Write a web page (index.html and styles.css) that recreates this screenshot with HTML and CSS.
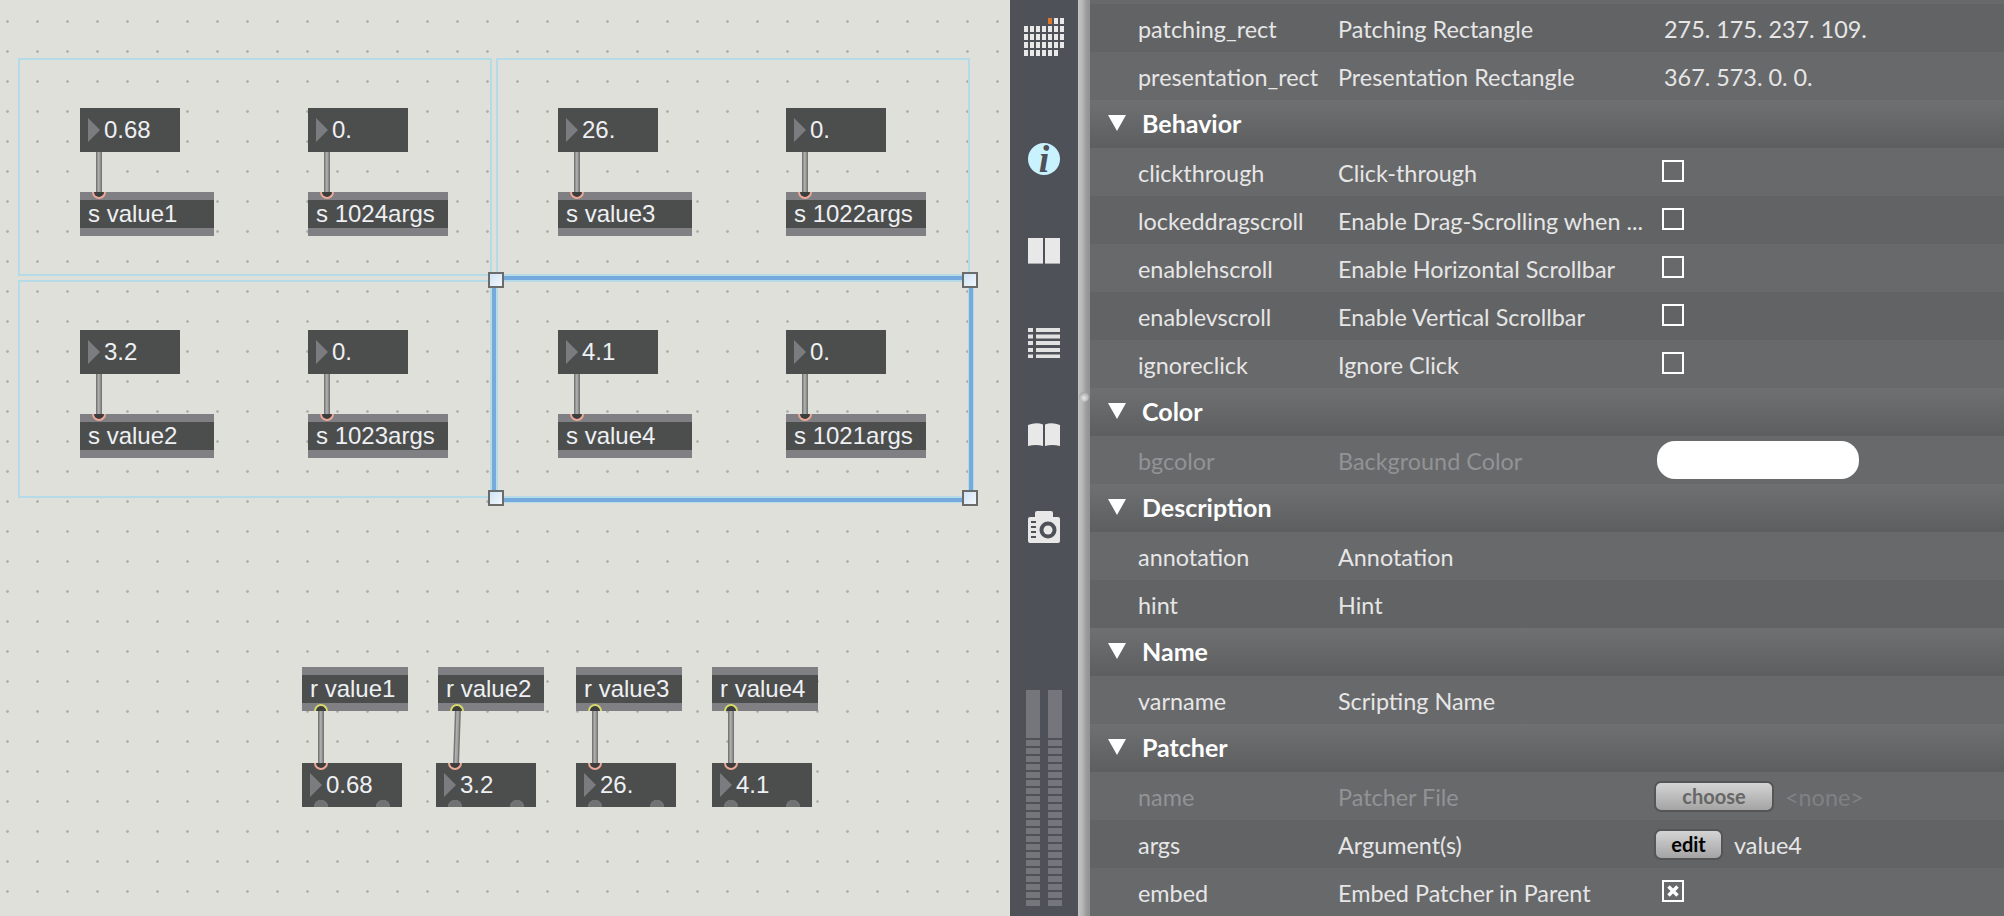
FILE: index.html
```html
<!DOCTYPE html>
<html lang="en">
<head>
    <meta charset="UTF-8">
    <meta name="viewport" content="width=device-width, initial-scale=1.0">
    <title>Patcher</title>
    <link rel="stylesheet" href="styles.css">
</head>
<body>
    <main class="canvas">
        <div class="patch patch-a">
            <div class="pair">
                <div class="num">0.68</div>
                <div class="cable cable-send"></div>
                <div class="send send-short">s value1</div>
            </div>
            <div class="pair">
                <div class="num">0.</div>
                <div class="cable cable-send"></div>
                <div class="send send-long">s 1024args</div>
            </div>
        </div>
        <div class="patch patch-b">
            <div class="pair">
                <div class="num">26.</div>
                <div class="cable cable-send"></div>
                <div class="send send-short">s value3</div>
            </div>
            <div class="pair">
                <div class="num">0.</div>
                <div class="cable cable-send"></div>
                <div class="send send-long">s 1022args</div>
            </div>
        </div>
        <div class="patch patch-c">
            <div class="pair">
                <div class="num">3.2</div>
                <div class="cable cable-send"></div>
                <div class="send send-short">s value2</div>
            </div>
            <div class="pair">
                <div class="num">0.</div>
                <div class="cable cable-send"></div>
                <div class="send send-long">s 1023args</div>
            </div>
        </div>
        <div class="patch patch-d">
            <div class="pair">
                <div class="num">4.1</div>
                <div class="cable cable-send"></div>
                <div class="send send-short">s value4</div>
            </div>
            <div class="pair">
                <div class="num">0.</div>
                <div class="cable cable-send"></div>
                <div class="send send-long">s 1021args</div>
            </div>
        </div>

        <div class="selection">
            <span class="handle handle-tl"></span>
            <span class="handle handle-tr"></span>
            <span class="handle handle-bl"></span>
            <span class="handle handle-br"></span>
        </div>

        <div class="receivers">
            <div class="recv-pair">
                <div class="recv">r value1</div>
                <div class="cable cable-recv"></div>
                <div class="num num-out">0.68</div>
            </div>
            <div class="recv-pair">
                <div class="recv">r value2</div>
                <div class="cable cable-recv cable-slant"></div>
                <div class="num num-out num-nudge">3.2</div>
            </div>
            <div class="recv-pair">
                <div class="recv">r value3</div>
                <div class="cable cable-recv"></div>
                <div class="num num-out">26.</div>
            </div>
            <div class="recv-pair">
                <div class="recv">r value4</div>
                <div class="cable cable-recv"></div>
                <div class="num num-out">4.1</div>
            </div>
        </div>
    </main>

    <nav class="sidebar">
        <svg class="icon icon-logo" width="40" height="38" viewBox="0 0 40 38">
            <g stroke="#e8e8e8" stroke-width="6" stroke-dasharray="4 2">
                <line x1="24" y1="3" x2="40" y2="3" stroke="#d9772b" stroke-dasharray="4 40"/>
                <line x1="30" y1="3" x2="40" y2="3"/>
                <line x1="0" y1="11" x2="40" y2="11"/>
                <line x1="0" y1="19" x2="40" y2="19"/>
                <line x1="0" y1="27" x2="40" y2="27"/>
                <line x1="0" y1="35" x2="34" y2="35"/>
            </g>
        </svg>
        <div class="icon icon-info"><span class="info-letter">i</span></div>
        <svg class="icon icon-pages" width="32" height="26" viewBox="0 0 32 26">
            <rect x="0" y="0" width="15" height="26" fill="#a9aaad"/>
            <rect x="17" y="0" width="15" height="26" fill="#a9aaad"/>
            <rect x="0" y="0" width="15" height="25" fill="#e8e8e8"/>
            <rect x="17" y="0" width="15" height="25" fill="#e8e8e8"/>
        </svg>
        <svg class="icon icon-list" width="32" height="30" viewBox="0 0 32 30">
            <g fill="#e2e2e2">
                <rect x="0" y="0" width="5" height="4"/>
                <rect x="8" y="0" width="24" height="4"/>
                <rect x="0" y="6.500" width="5" height="4"/>
                <rect x="8" y="6.500" width="24" height="4"/>
                <rect x="0" y="13" width="5" height="4"/>
                <rect x="8" y="13" width="24" height="4"/>
                <rect x="0" y="20" width="5" height="4"/>
                <rect x="8" y="20" width="24" height="4"/>
                <rect x="0" y="26.500" width="5" height="3.500"/>
                <rect x="8" y="26.500" width="24" height="3.500"/>
            </g>
        </svg>
        <svg class="icon icon-book" width="32" height="24" viewBox="0 0 32 24">
            <path fill="#e8e8e8" d="M0 2 Q8 -1 15 1.500 V23 Q8 21 0 23 Z M17 1.500 Q24 -1 32 2 V23 Q24 21 17 23 Z"/>
        </svg>
        <svg class="icon icon-camera" width="32" height="32" viewBox="0 0 32 32">
            <path fill="#e8e8e8" d="M7 6 V2 Q7 0 9 0 H23 Q25 0 25 2 V6 H30 Q32 6 32 8 V30 Q32 32 30 32 H2 Q0 32 0 30 V8 Q0 6 2 6 Z"/>
            <g fill="#4e5158">
                <rect x="3" y="10" width="5" height="2"/>
                <rect x="3" y="15" width="5" height="2"/>
                <rect x="3" y="20" width="5" height="2"/>
                <rect x="3" y="25" width="5" height="2"/>
                <circle cx="20" cy="19" r="8.500"/>
            </g>
            <circle cx="20" cy="19" r="4.500" fill="#e8e8e8"/>
        </svg>
        <div class="meter">
            <div class="meter-col"></div>
            <div class="meter-col"></div>
        </div>
    </nav>

    <div class="splitter"><span class="knob"></span></div>

    <section class="inspector">
        <div class="strip"></div>
        <div class="row row-dark"><span>patching_rect</span><span>Patching Rectangle</span><span class="value">275. 175. 237. 109.</span></div>
        <div class="row"><span>presentation_rect</span><span>Presentation Rectangle</span><span class="value">367. 573. 0. 0.</span></div>
        <div class="group"><span class="arrow"></span>Behavior</div>
        <div class="row"><span>clickthrough</span><span>Click-through</span><span class="check"></span></div>
        <div class="row row-dark"><span>lockeddragscroll</span><span>Enable Drag-Scrolling when ...</span><span class="check"></span></div>
        <div class="row"><span>enablehscroll</span><span>Enable Horizontal Scrollbar</span><span class="check"></span></div>
        <div class="row row-dark"><span>enablevscroll</span><span>Enable Vertical Scrollbar</span><span class="check"></span></div>
        <div class="row"><span>ignoreclick</span><span>Ignore Click</span><span class="check"></span></div>
        <div class="group"><span class="arrow"></span>Color</div>
        <div class="row row-off"><span>bgcolor</span><span>Background Color</span><span class="swatch"></span></div>
        <div class="group"><span class="arrow"></span>Description</div>
        <div class="row"><span>annotation</span><span>Annotation</span></div>
        <div class="row row-dark"><span>hint</span><span>Hint</span></div>
        <div class="group"><span class="arrow"></span>Name</div>
        <div class="row"><span>varname</span><span>Scripting Name</span></div>
        <div class="group"><span class="arrow"></span>Patcher</div>
        <div class="row row-off"><span>name</span><span>Patcher File</span><span class="cell-btn"><button class="btn btn-choose">choose</button><span class="none">&lt;none&gt;</span></span></div>
        <div class="row row-dark"><span>args</span><span>Argument(s)</span><span class="cell-btn"><button class="btn btn-edit">edit</button><span>value4</span></span></div>
        <div class="row"><span>embed</span><span>Embed Patcher in Parent</span><span class="check check-on">
            <svg width="14" height="14" viewBox="0 0 14 14"><path d="M2.500 2.500 L11.500 11.500 M11.500 2.500 L2.500 11.500" stroke="#fff" stroke-width="3.500"/></svg>
        </span></div>
    </section>
</body>
</html>
```

FILE: styles.css
```css
body {
    margin: 0;
    width: 2004px;
    height: 916px;
    overflow: hidden;
    display: flex;
    background-color: #dfe0da;
}

/* patcher canvas */
.canvas {
    position: relative;
    width: 1010px;
    height: 916px;
    flex: none;
    background-color: #dfe0da;
    background-image: radial-gradient(circle at 7.5px 21.5px, #b0b1aa 1px, transparent 1.6px);
    background-size: 30px 30px;
    font-family: "Liberation Sans", Arial, sans-serif;
    font-size: 24px;
    color: #eef0f3;
}

.patch {
    position: absolute;
    width: 474px;
    height: 218px;
    box-sizing: border-box;
    padding: 48px 0 0 60px;
    border: 2px solid #b5dae8;
    display: flex;
}

.patch-a { left: 18px; top: 58px; }
.patch-b { left: 496px; top: 58px; }
.patch-c { left: 18px; top: 280px; }
.patch-d { left: 496px; top: 280px; }

.pair {
    width: 228px;
    flex: none;
    display: flex;
    flex-direction: column;
    align-items: flex-start;
}

.num {
    position: relative;
    width: 100px;
    height: 44px;
    box-sizing: border-box;
    padding-left: 24px;
    line-height: 43px;
    background-color: #4c4e4d;
}

.num::before {
    content: "";
    position: absolute;
    left: 8px;
    top: 10px;
    border-left: 12px solid #7b7c80;
    border-top: 12px solid transparent;
    border-bottom: 12px solid transparent;
}

.send, .recv {
    position: relative;
    height: 44px;
    box-sizing: border-box;
    padding-left: 8px;
    line-height: 43px;
    background: linear-gradient(#808084 8px, #4c4e4d 8px, #4c4e4d 36px, #808084 36px);
}

.send-short { width: 134px; }
.send-long { width: 140px; }

/* inlet on the send object */
.send::before {
    content: "";
    position: absolute;
    left: 12px;
    top: 0;
    width: 10px;
    height: 5px;
    border: 2px solid #eda796;
    border-top: none;
    border-radius: 0 0 8px 8px;
    background-color: #3c3d3d;
}

.cable {
    width: 6px;
    background: linear-gradient(90deg, #777 0, #777 1px, #b0b0b0 2px, #a0a0a0 4px, #777 5px);
}

.cable-send {
    height: 40px;
    margin-left: 16px;
}

.receivers {
    position: absolute;
    left: 302px;
    top: 667px;
    display: grid;
    grid-template-columns: 136px 138px 136px 106px;
}

.recv-pair {
    display: flex;
    flex-direction: column;
    align-items: flex-start;
}

.recv {
    width: 106px;
}

/* outlet on the receive object */
.recv::after {
    content: "";
    position: absolute;
    left: 12px;
    bottom: 0;
    width: 10px;
    height: 5px;
    border: 2px solid #d9d96b;
    border-bottom: none;
    border-radius: 8px 8px 0 0;
    background-color: #3c3d3d;
}

.cable-recv {
    height: 52px;
    margin-left: 16px;
}

.cable-slant {
    transform: rotate(2deg);
}

.num-out {
    background-image:
        radial-gradient(circle at 19px 44px, #707274 7px, transparent 7.5px),
        radial-gradient(circle at 81px 44px, #707274 7px, transparent 7.5px);
}

.num-nudge {
    margin-left: -2px;
}

/* inlet on the lower number box */
.num-out::after {
    content: "";
    position: absolute;
    left: 12px;
    top: 0;
    width: 10px;
    height: 5px;
    border: 2px solid #eda796;
    border-top: none;
    border-radius: 0 0 8px 8px;
    background-color: #3c3d3d;
}

.selection {
    position: absolute;
    left: 492px;
    top: 276px;
    width: 473px;
    height: 218px;
    border: 4px solid #76a9dc;
    box-shadow: 0 0 0 1px #b5dae8, inset 0 0 0 1px #b5dae8;
}

.handle {
    position: absolute;
    width: 12px;
    height: 12px;
    border: 2px solid #6a6b6b;
    background: linear-gradient(135deg, #cfe3f7, #f2f6fa);
}

.handle-tl { left: -8px; top: -8px; }
.handle-tr { right: -9px; top: -8px; }
.handle-bl { left: -8px; bottom: -8px; }
.handle-br { right: -9px; bottom: -8px; }

/* icon bar */
.sidebar {
    width: 68px;
    height: 916px;
    flex: none;
    box-sizing: border-box;
    padding-top: 18px;
    display: flex;
    flex-direction: column;
    align-items: center;
    background-color: #4e5158;
}

.icon {
    display: block;
    flex: none;
}

.icon-info {
    width: 32px;
    height: 32px;
    margin-top: 87px;
    border-radius: 50%;
    display: flex;
    justify-content: center;
    background-color: #c9f2ff;
}

.icon-pages { margin-top: 63px; }
.icon-list { margin-top: 64px; }
.icon-book { margin-top: 65px; }
.icon-camera { margin-top: 64px; }

.info-letter {
    font-family: "Liberation Serif", serif;
    font-size: 38px;
    font-style: italic;
    font-weight: bold;
    line-height: 32px;
    color: #4e5158;
}

.meter {
    margin-top: 147px;
    display: flex;
    gap: 8px;
}

.meter-col {
    width: 14px;
    height: 216px;
    background:
        linear-gradient(#74767b, #74767b) top / 14px 48px no-repeat,
        repeating-linear-gradient(#74767b 0, #74767b 6px, transparent 6px, transparent 8px) 0 50px / 14px 166px no-repeat;
}

.splitter {
    position: relative;
    width: 12px;
    height: 916px;
    flex: none;
    background: linear-gradient(90deg, #c4c4c4 0, #b4b4b4 5px, #9c9c9c 8px, #929292 12px);
}

.knob {
    position: absolute;
    left: 1px;
    top: 392px;
    width: 10px;
    height: 10px;
    border-radius: 50%;
    background: radial-gradient(circle at 50% 60%, #e8e8e8, #8c8c8c);
}

/* inspector */
.inspector {
    flex: 1;
    height: 916px;
    overflow: hidden;
    font-family: Lato, sans-serif;
    font-size: 23.4px;
    color: #e6e6e6;
    background-color: #68696b;
}

.strip {
    height: 4px;
    background-color: #68696b;
}

.row {
    height: 48px;
    box-sizing: border-box;
    padding: 2px 0 0 48px;
    display: grid;
    grid-template-columns: 200px 316px 1fr;
    align-items: center;
    background-color: #68696b;
    white-space: nowrap;
}

.row-dark {
    background-color: #626365;
}

.row-off > span:nth-child(-n+2) {
    color: #929395;
}

.group {
    height: 48px;
    box-sizing: border-box;
    padding: 0 0 2px 18px;
    display: flex;
    align-items: center;
    font-size: 25px;
    font-weight: bold;
    color: #fff;
    background: linear-gradient(#6f7072, #5d5e60);
}

.arrow {
    width: 0;
    height: 0;
    margin-right: 16px;
    border-top: 16px solid #fff;
    border-left: 9px solid transparent;
    border-right: 9px solid transparent;
}

.value {
    margin-left: 10px;
}

.check {
    width: 22px;
    height: 22px;
    box-sizing: border-box;
    margin: -4px 0 0 8px;
    border: 2px solid #fff;
    display: flex;
    align-items: center;
    justify-content: center;
}

.swatch {
    width: 202px;
    height: 38px;
    margin: -2px 0 0 3px;
    border-radius: 18px;
    background-color: #fff;
}

.cell-btn {
    display: flex;
    align-items: center;
    gap: 11px;
}

.btn {
    height: 31px;
    box-sizing: border-box;
    margin-top: -2px;
    padding: 0;
    border: 2px solid #555;
    border-radius: 7px;
    font-family: Lato, sans-serif;
    font-size: 20px;
    font-weight: bold;
    line-height: 26px;
    background: linear-gradient(#d4d4d4, #a4a4a4);
}

.btn-choose {
    width: 120px;
    color: #666;
}

.btn-edit {
    width: 69px;
    color: #000;
}

.none {
    color: #808183;
}
```
